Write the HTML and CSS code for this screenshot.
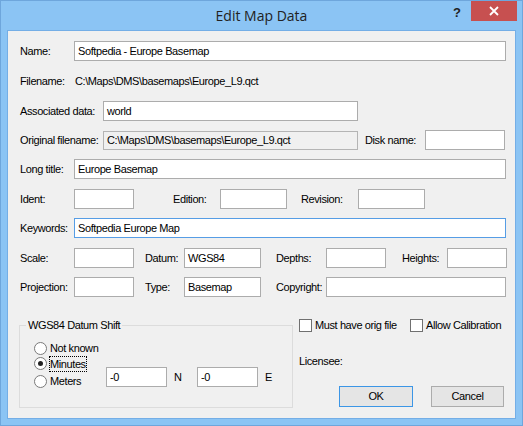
FILE: index.html
```html
<!DOCTYPE html>
<html>
<head>
<meta charset="utf-8">
<title>Edit Map Data</title>
<link rel="stylesheet" href="styles.css">
</head>
<body>
<div class="window">
  <div class="titlebar">
    <div></div>
    <div class="title">Edit Map Data</div>
    <div class="controls">
      <span class="help">?</span>
      <span class="close"><svg width="10" height="10" viewBox="0 0 10 10"><path d="M1 1 L9 9 M9 1 L1 9" stroke="#fff" stroke-width="1.8" fill="none"/></svg></span>
    </div>
  </div>
  <div class="client">
    <div class="rows">
      <div class="row">
        <span class="lbl">Name:</span>
        <span class="field grow">Softpedia - Europe Basemap</span>
      </div>
      <div class="row g10">
        <span class="lbl">Filename:</span>
        <span class="value">C:\Maps\DMS\basemaps\Europe_L9.qct</span>
      </div>
      <div class="row g10">
        <span class="lbl wide">Associated data:</span>
        <span class="field w255">world</span>
      </div>
      <div class="row">
        <span class="lbl wide">Original filename:</span>
        <span class="field w255 disabled">C:\Maps\DMS\basemaps\Europe_L9.qct</span>
        <span class="lbl disk">Disk name:</span>
        <span class="field w80"></span>
      </div>
      <div class="row">
        <span class="lbl">Long title:</span>
        <span class="field grow">Europe Basemap</span>
      </div>
      <div class="row g10">
        <span class="lbl">Ident:</span>
        <span class="field w60"></span>
        <span class="lbl edition">Edition:</span>
        <span class="field w67"></span>
        <span class="lbl revision">Revision:</span>
        <span class="field w67"></span>
      </div>
      <div class="row">
        <span class="lbl">Keywords:</span>
        <span class="field grow focus">Softpedia Europe Map</span>
      </div>
      <div class="row g10">
        <span class="lbl">Scale:</span>
        <span class="field w60"></span>
        <span class="lbl datum">Datum:</span>
        <span class="field w77">WGS84</span>
        <span class="lbl depths">Depths:</span>
        <span class="field w60"></span>
        <span class="lbl heights">Heights:</span>
        <span class="field w60"></span>
      </div>
      <div class="row">
        <span class="lbl">Projection:</span>
        <span class="field w60"></span>
        <span class="lbl datum">Type:</span>
        <span class="field w77">Basemap</span>
        <span class="lbl depths">Copyright:</span>
        <span class="field grow"></span>
      </div>
    </div>

    <div class="bottom">
      <div class="group">
        <span class="legend">WGS84 Datum Shift</span>
        <div class="radios">
          <div class="radio r1"><span class="circle"></span><span class="rlabel">Not known</span></div>
          <div class="radio r2"><span class="circle checked"></span><span class="rlabel focused">Minutes</span></div>
          <div class="radio r3"><span class="circle"></span><span class="rlabel">Meters</span></div>
        </div>
        <div class="shift">
          <span class="field w61">-0</span>
          <span class="unit">N</span>
          <span class="field w61">-0</span>
          <span class="unit">E</span>
        </div>
      </div>
      <div class="side">
        <div class="checks">
          <div class="check c1"><span class="box"></span><span class="clabel">Must have orig file</span></div>
          <div class="check"><span class="box"></span><span class="clabel">Allow Calibration</span></div>
        </div>
        <div class="licensee">Licensee:</div>
        <div class="buttons">
          <span class="btn default">OK</span>
          <span class="btn cancel">Cancel</span>
        </div>
      </div>
    </div>
  </div>
</div>
</body>
</html>
```

FILE: styles.css
```css
* { box-sizing: border-box; }

html, body {
  margin: 0;
  padding: 0;
  width: 523px;
  height: 426px;
  overflow: hidden;
  background: #8bc4f4;
}

.window {
  width: 523px;
  height: 426px;
  border: 1px solid #6ea6dc;
  background: #8bc4f4;
  display: flex;
  flex-direction: column;
  font-family: "Liberation Sans", Arial, sans-serif;
  font-size: 11px;
  letter-spacing: -0.4px;
  color: #000;
}

.titlebar {
  height: 29px;
  flex: none;
  display: grid;
  grid-template-columns: 1fr auto 1fr;
  align-items: start;
  letter-spacing: 0;
}

.title {
  font-family: "Open Sans", "Noto Sans", sans-serif;
  font-size: 14px;
  line-height: 29px;
  color: #222;
  white-space: nowrap;
}

.controls {
  display: flex;
  justify-content: flex-end;
  align-items: flex-start;
}

.help {
  width: 16px;
  margin-top: 5px;
  margin-right: 6px;
  text-align: center;
  font-family: "Liberation Sans", Arial, sans-serif;
  font-weight: bold;
  font-size: 13px;
  line-height: 13px;
  color: #222;
}

.close {
  width: 46px;
  height: 20px;
  margin-right: 5px;
  background: #c75050;
  display: flex;
  align-items: center;
  justify-content: center;
}

.close svg { display: block; }

.client {
  flex: 1;
  margin: 0 6px 6px 6px;
  border: 1px solid #74aee6;
  background: #f0f0f0;
  padding: 10px 9px 0 12px;
  display: flex;
  flex-direction: column;
}

.rows {
  display: flex;
  flex-direction: column;
  gap: 9px;
}

.row {
  display: flex;
  align-items: center;
  height: 20px;
}

.row.g10 { margin-top: 1px; }

.lbl {
  flex: none;
  width: 54px;
  white-space: nowrap;
  line-height: 13px;
}

.lbl.wide { width: 83px; }
.lbl.disk { width: 60px; margin-left: 7px; }
.lbl.edition { width: 47px; margin-left: 39px; }
.lbl.revision { width: 57px; margin-left: 14px; }
.lbl.datum { width: 39px; margin-left: 11px; }
.lbl.depths { width: 50px; margin-left: 15px; }
.lbl.heights { width: 45px; margin-left: 16px; }

.value {
  padding-left: 1px;
  white-space: nowrap;
}

.field {
  flex: none;
  height: 20px;
  border: 1px solid #acacac;
  background: #fff;
  padding: 0 3px;
  display: flex;
  align-items: center;
  white-space: nowrap;
  line-height: 13px;
}

.field.grow { flex: 1; }
.field.w255 { width: 255px; }
.field.w80 { width: 80px; }
.field.w60 { width: 60px; }
.field.w61 { width: 61px; }
.field.w67 { width: 67px; }
.field.w77 { width: 77px; }
.field.disabled { background: #f0f0f0; border-color: #b4b4b4; height: 19px; }
.field.focus { border-color: #569de5; }

.bottom {
  margin-top: 22px;
  display: flex;
  align-items: flex-start;
}

.group {
  position: relative;
  flex: none;
  width: 274px;
  height: 83px;
  margin-top: 6px;
  margin-left: -1px;
  border: 1px solid #dcdcdc;
  padding: 16px 0 0 14px;
  display: flex;
  align-items: flex-start;
}

.legend {
  position: absolute;
  top: -7px;
  left: 6px;
  padding: 0 2px;
  background: #f0f0f0;
  line-height: 13px;
  white-space: nowrap;
}

.radios {
  width: 72px;
  flex: none;
  display: flex;
  flex-direction: column;
}

.radio {
  display: flex;
  align-items: center;
  height: 13px;
}

.radio.r2 { margin-top: 2px; }
.radio.r3 { margin-top: 5px; }

.circle {
  flex: none;
  width: 13px;
  height: 13px;
  border-radius: 50%;
  border: 1px solid #7a7a7a;
  background: #fff;
  display: flex;
  align-items: center;
  justify-content: center;
}

.circle.checked::after {
  content: "";
  width: 5px;
  height: 5px;
  border-radius: 50%;
  background: #222;
}

.rlabel {
  margin-left: 3px;
  line-height: 13px;
  white-space: nowrap;
}

.rlabel.focused {
  margin-left: 2px;
  border: 1px dotted #000;
  line-height: 14px;
}

.shift {
  margin-top: 25px;
  display: flex;
  align-items: center;
}

.unit {
  width: 30px;
  padding-left: 7px;
  line-height: 13px;
}

.side {
  flex: 1;
  margin-left: 6px;
  display: flex;
  flex-direction: column;
}

.checks {
  display: flex;
  align-items: center;
  height: 13px;
}

.check {
  display: flex;
  align-items: center;
}

.check.c1 { width: 111px; }

.box {
  flex: none;
  width: 13px;
  height: 13px;
  border: 1px solid #707070;
  background: #fff;
}

.clabel {
  margin-left: 3px;
  white-space: nowrap;
  line-height: 13px;
}

.licensee {
  margin-top: 23px;
  line-height: 13px;
}

.buttons {
  margin-top: 18px;
  display: flex;
}

.btn {
  height: 21px;
  border: 1px solid #acacac;
  background: #e5e5e5;
  display: flex;
  align-items: center;
  justify-content: center;
  line-height: 13px;
}

.btn.default {
  width: 74px;
  margin-left: 40px;
  border-color: #3c96e6;
}

.btn.cancel {
  width: 73px;
  margin-left: 18px;
}
```
